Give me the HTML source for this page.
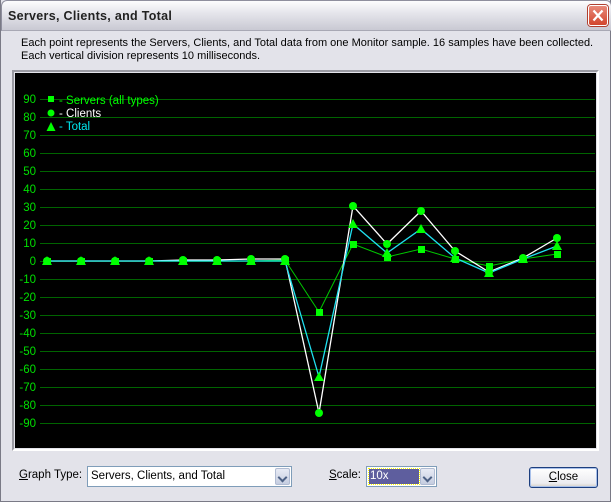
<!DOCTYPE html>
<html><head><style>
*{margin:0;padding:0;box-sizing:border-box}
body{width:611px;height:502px;overflow:hidden;font-family:"Liberation Sans",sans-serif;font-size:11px;background:#fff}
.win{position:absolute;left:0;top:0;width:611px;height:502px;background:#e3e3ea;border:1px solid #7a7a86;border-top:none}
.title{position:absolute;left:0;top:0;width:611px;height:31px;background:linear-gradient(#fdfdfe,#e6e6ec 40%,#c9c9d3);border:1px solid #8f8f9e;border-bottom:1px solid #a8a8b4;border-radius:6px 6px 0 0}
.title span{position:absolute;left:6px;top:8px;font-size:12.5px;font-weight:bold;color:#222;letter-spacing:0.3px}
.x{position:absolute;left:587px;top:5px;width:20px;height:21px;border:1px solid #fff;border-radius:3px;background:linear-gradient(#e88a7a,#d2462e);box-shadow:0 0 0 1px #b04030}
.desc{position:absolute;left:20px;top:37px;font-size:11px;line-height:13px;color:#000;white-space:nowrap}
.frame{position:absolute;left:11px;top:70px;width:587px;height:381px;border:2px solid;border-color:#9a9aa2 #fff #fff #9a9aa2}
.lbl{position:absolute;top:469px;font-size:11.5px}
.combo{position:absolute;top:466px;height:21px;background:#fff;border:1px solid #7f9db9}
.combo .t{position:absolute;left:3px;top:3px;font-size:11.5px}
.arr{position:absolute;right:1px;top:1px;width:15px;height:17px;background:linear-gradient(#e8ebf5,#c5cde0);border:1px solid #b0bbd2;border-radius:2px}
.arr:after{content:"";position:absolute;left:3px;top:5px;width:5px;height:5px;border-right:2px solid #4d6185;border-bottom:2px solid #4d6185;transform:rotate(45deg)}
.btn{position:absolute;left:528px;top:467px;width:69px;height:21px;border:1px solid #1c3e7e;border-radius:3px;background:linear-gradient(#fff,#ececf0 80%,#d6d0c5);box-shadow:inset 0 0 0 1px #a8c0ea;text-align:center;font-size:11.5px;line-height:19px}
</style></head><body>
<div class="win">
<div class="title"><span>Servers, Clients, and Total</span></div>
<div class="x"><svg width="18" height="19" viewBox="0 0 18 19"><path d="M4.5 4.5L13.5 14.5M13.5 4.5L4.5 14.5" stroke="#fff" stroke-width="2.2"/></svg></div>
<div class="desc">Each point represents the Servers, Clients, and Total data from one Monitor sample. 16 samples have been collected.<br>Each vertical division represents 10 milliseconds.</div>
<div class="frame"></div>
<svg style="position:absolute;left:0;top:0" width="611" height="502">
<rect x="14" y="73" width="581" height="375" fill="#000"/>
<g stroke="#006400" stroke-width="1">
<path d="M39 99.5H594M39 117.5H594M39 135.5H594M39 153.5H594M39 171.5H594M39 189.5H594M39 207.5H594M39 225.5H594M39 243.5H594M39 261.5H594M39 279.5H594M39 297.5H594M39 315.5H594M39 333.5H594M39 351.5H594M39 369.5H594M39 387.5H594M39 405.5H594M39 423.5H594"/>
</g>
<g fill="#00e000" font-family="Liberation Sans" font-size="11.5" text-anchor="end">
<text x="35" y="103">90</text><text x="35" y="121">80</text><text x="35" y="139">70</text><text x="35" y="157">60</text><text x="35" y="175">50</text><text x="35" y="193">40</text><text x="35" y="211">30</text><text x="35" y="229">20</text><text x="35" y="247">10</text><text x="35" y="265">0</text><text x="35" y="283">-10</text><text x="35" y="301">-20</text><text x="35" y="319">-30</text><text x="35" y="337">-40</text><text x="35" y="355">-50</text><text x="35" y="373">-60</text><text x="35" y="391">-70</text><text x="35" y="409">-80</text><text x="35" y="427">-90</text>
</g>
<g font-family="Liberation Sans" font-size="11.5">
<rect x="47" y="96" width="6" height="6" fill="#00ff00"/><text x="58" y="104" fill="#00ff00">- Servers (all types)</text>
<circle cx="50" cy="113" r="3.5" fill="#00ff00"/><text x="58" y="117" fill="#fff">- Clients</text>
<path d="M50 122L54.5 131H45.5Z" fill="#00ff00"/><text x="58" y="130" fill="#00e8f0">- Total</text>
</g>
<polyline fill="none" stroke="#00c800" stroke-width="1" points="46,261 80,261 114,261 148,261 182,261 216,261 250,261 284,260 318,312 352,244 386,257 420,249 454,259 488,266 522,259 556,254"/>
<polyline fill="none" stroke="#fff" stroke-width="1.3" points="46,261 80,261 114,261 148,261 182,260 216,260 250,259 284,259 318,413 352,206 386,244 420,211 454,251 488,272 522,258 556,238"/>
<polyline fill="none" stroke="#20e0f0" stroke-width="1.3" points="46,261 80,261 114,261 148,261 182,261 216,261 250,261 284,261 318,377 352,224 386,253 420,229 454,258 488,273 522,259 556,246"/>
<g fill="#00ff00">
<rect x="43" y="258" width="7" height="7"/><rect x="77" y="258" width="7" height="7"/><rect x="111" y="258" width="7" height="7"/><rect x="145" y="258" width="7" height="7"/><rect x="179" y="258" width="7" height="7"/><rect x="213" y="258" width="7" height="7"/><rect x="247" y="258" width="7" height="7"/><rect x="281" y="257" width="7" height="7"/><rect x="315" y="309" width="7" height="7"/><rect x="349" y="241" width="7" height="7"/><rect x="383" y="254" width="7" height="7"/><rect x="417" y="246" width="7" height="7"/><rect x="451" y="256" width="7" height="7"/><rect x="485" y="263" width="7" height="7"/><rect x="519" y="256" width="7" height="7"/><rect x="553" y="251" width="7" height="7"/>
<circle cx="46" cy="261" r="4"/><circle cx="80" cy="261" r="4"/><circle cx="114" cy="261" r="4"/><circle cx="148" cy="261" r="4"/><circle cx="182" cy="260" r="4"/><circle cx="216" cy="260" r="4"/><circle cx="250" cy="259" r="4"/><circle cx="284" cy="259" r="4"/><circle cx="318" cy="413" r="4"/><circle cx="352" cy="206" r="4"/><circle cx="386" cy="244" r="4"/><circle cx="420" cy="211" r="4"/><circle cx="454" cy="251" r="4"/><circle cx="488" cy="272" r="4"/><circle cx="522" cy="258" r="4"/><circle cx="556" cy="238" r="4"/>
<path d="M46 256l5 9h-10zM80 256l5 9h-10zM114 256l5 9h-10zM148 256l5 9h-10zM182 256l5 9h-10zM216 256l5 9h-10zM250 256l5 9h-10zM284 256l5 9h-10zM318 372l5 9h-10zM352 219l5 9h-10zM386 248l5 9h-10zM420 224l5 9h-10zM454 253l5 9h-10zM488 268l5 9h-10zM522 254l5 9h-10zM556 241l5 9h-10z"/>
</g>
</svg>
<div class="lbl" style="left:18px"><u>G</u>raph Type:</div>
<div class="combo" style="left:86px;width:205px"><span class="t">Servers, Clients, and Total</span><div class="arr"></div></div>
<div class="lbl" style="left:328px"><u>S</u>cale:</div>
<div class="combo" style="left:365px;width:71px"><span class="t" style="left:2px;top:2px;width:50px;height:15px;background:#5e5e9e;color:#fff;outline:1px dotted #ff0;padding-left:1px;line-height:15px">10x</span><div class="arr"></div></div>
<div class="btn"><u>C</u>lose</div>
</div>
</body></html>
